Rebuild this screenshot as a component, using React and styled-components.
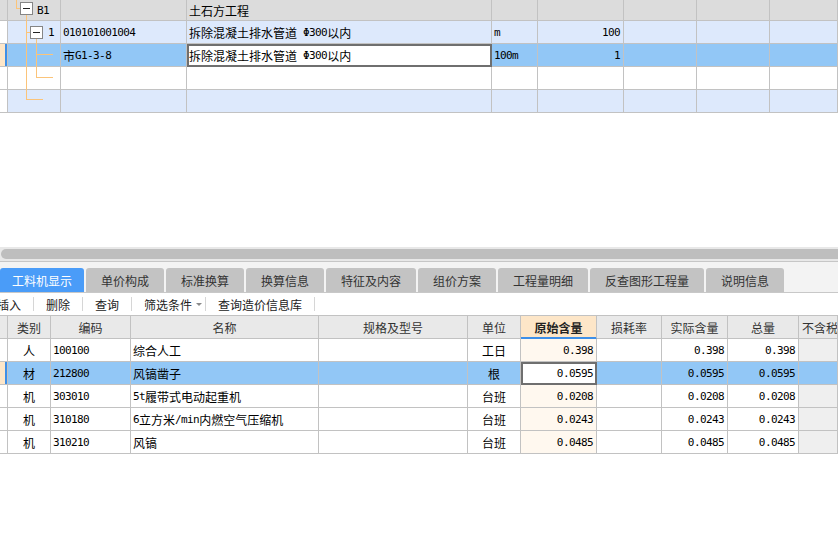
import React from "react";
import styled, { createGlobalStyle } from "styled-components";

const GlobalStyle = createGlobalStyle`
  html, body { margin: 0; padding: 0; background: #fff; }
  body {
    font-family: "Noto Sans CJK SC", "Noto Sans", sans-serif;
    font-size: 12px;
    color: #000;
  }
  * { box-sizing: border-box; }
`;

const LINE = "#c2c2c2";

const Page = styled.div`
  width: 838px;
  height: 533px;
  overflow: hidden;
  display: flex;
  flex-direction: column;
  background: #fff;
`;

const TopPane = styled.div`
  position: relative;
  height: 247px;
  flex: none;
`;

const GridRow = styled.div`
  display: grid;
  grid-template-columns: ${(p) => p.$cols};
  height: ${(p) => p.$h}px;
  background: ${(p) => p.$bg || "#fff"};
`;

const Cell = styled.div`
  display: flex;
  align-items: center;
  justify-content: ${(p) =>
    p.$align === "right" ? "flex-end" : p.$align === "center" ? "center" : "flex-start"};
  padding: ${(p) => (p.$align === "right" ? "0 3px 0 0" : p.$align === "center" ? "0" : `0 0 0 ${p.$pad ?? 2}px`)};
  border-right: 1px solid ${LINE};
  border-bottom: 1px solid ${LINE};
  background: ${(p) => p.$bg || "transparent"};
  white-space: nowrap;
  overflow: hidden;
  font-size: 12px;
  color: ${(p) => p.$color || "#000"};
  font-weight: ${(p) => (p.$bold ? 700 : 400)};
  ${(p) => (p.$edit ? "outline: 2px solid #6f6f6f; outline-offset: -2px; background: #fff;" : "")}
`;

const Indicator = styled(Cell)`
  background: ${(p) =>
    p.$sel ? "linear-gradient(to right, #fde6c8 0 5px, #3d8fe8 5px 7px)" : p.$bg || "transparent"};
`;

const HeadCell = styled(Cell)`
  color: #333;
  ${(p) =>
    p.$active
      ? "background: #fde6c8; font-weight: 700; color: #222; border-bottom-color: #3d8fe8; box-shadow: inset 0 -1px 0 #3d8fe8;"
      : ""}
`;

const Mono = styled.span`
  font-family: "DejaVu Sans Mono", "Liberation Mono", monospace;
  font-size: 11px;
  letter-spacing: -0.6px;
  white-space: pre;
`;

const TreeSvg = styled.svg`
  position: absolute;
  left: 0;
  top: 0;
  pointer-events: none;
`;

const Scrollbar = styled.div`
  height: 15px;
  flex: none;
  background: #e8e8e8;
  padding: 2px 0 2px 1px;
  border-bottom: 1px solid #c6c6c6;
`;

const Thumb = styled.div`
  height: 10px;
  background: #bebebe;
  border-radius: 5px 0 0 5px;
`;

const TabStrip = styled.div`
  height: 31px;
  flex: none;
  background: #f3f3f3;
  border-bottom: 1px solid #c8c8c8;
  display: flex;
  align-items: flex-end;
  gap: 2px;
`;

const Tab = styled.div`
  width: ${(p) => p.$w}px;
  height: 24px;
  flex: none;
  display: flex;
  align-items: center;
  justify-content: center;
  border-radius: 3px 3px 0 0;
  background: ${(p) => (p.$active ? "#4a9cf8" : "#c3c3c3")};
  color: ${(p) => (p.$active ? "#fff" : "#333")};
  font-size: 12px;
  white-space: nowrap;
`;

const Toolbar = styled.div`
  height: 22px;
  flex: none;
  display: flex;
  align-items: center;
  background: #fff;
  overflow: hidden;
`;

const ToolItem = styled.div`
  display: flex;
  align-items: center;
  gap: 4px;
  padding: 0 ${(p) => (p.$menu ? 3 : 12)}px 0 12px;
  margin-left: ${(p) => (p.$first ? "-15px" : "0")};
  font-size: 12px;
  color: #222;
  white-space: nowrap;
`;

const Sep = styled.div`
  width: 1px;
  height: 14px;
  background: #d6d6d6;
  flex: none;
`;

const Caret = styled.span`
  width: 0;
  height: 0;
  border-left: 3px solid transparent;
  border-right: 3px solid transparent;
  border-top: 3px solid #8a8a8a;
  margin-top: 1px;
`;

const BottomGrid = styled.div`
  border-top: 1px solid ${LINE};
  flex: none;
`;

const TOP_COLS = "8px 53px 126px 305px 46px 86px 73px 73px 1fr";
const BOT_COLS = "8px 43px 80px 188px 149px 53px 76px 65px 66px 71px 1fr";

const ASCII = /^[\x20-\x7E\u03A6]+$/;
const mix = (t) =>
  t
    .split(/([\x20-\x7E\u03A6]+)/)
    .filter(Boolean)
    .map((s, i) => (ASCII.test(s) ? <Mono key={i}>{s}</Mono> : <span key={i}>{s}</span>));

const C = {
  gray: "#dcdcdc",
  light: "#dde9fc",
  sel: "#92c7f6",
  white: "#fff",
};

const tabs = [
  ["工料机显示", 84, true],
  ["单价构成", 78],
  ["标准换算", 78],
  ["换算信息", 78],
  ["特征及内容", 90],
  ["组价方案", 78],
  ["工程量明细", 90],
  ["反查图形工程量", 114],
  ["说明信息", 78],
];

const tools = ["插入", "删除", "查询", "筛选条件", "查询造价信息库"];

const items = [
  { type: "人", code: "100100", name: "综合人工", unit: "工日", orig: "0.398", act: "0.398", total: "0.398" },
  { type: "材", code: "212800", name: "风镐凿子", unit: "根", orig: "0.0595", act: "0.0595", total: "0.0595", sel: true },
  { type: "机", code: "303010", name: "5t履带式电动起重机", unit: "台班", orig: "0.0208", act: "0.0208", total: "0.0208" },
  { type: "机", code: "310180", name: "6立方米/min内燃空气压缩机", unit: "台班", orig: "0.0243", act: "0.0243", total: "0.0243" },
  { type: "机", code: "310210", name: "风镐", unit: "台班", orig: "0.0485", act: "0.0485", total: "0.0485" },
];

function TreeLines() {
  return (
    <TreeSvg width="60" height="112">
      <g stroke="#fbc47a" strokeWidth="1" fill="none" shapeRendering="crispEdges">
        <path d="M16.5 0 V8.5 H20" />
        <path d="M26.5 15 V99.5 H43" />
        <path d="M26.5 32.5 H30" />
        <path d="M36.5 38 V77.5 H53" />
        <path d="M36.5 54.5 H53" />
      </g>
      <g shapeRendering="crispEdges">
        <rect x="20.5" y="2.5" width="12" height="12" fill="#fff" stroke="#858585" />
        <path d="M23 8.5 H30" stroke="#222" />
        <rect x="30.5" y="26.5" width="12" height="12" fill="#fff" stroke="#858585" />
        <path d="M33 32.5 H40" stroke="#222" />
      </g>
    </TreeSvg>
  );
}

function TopRow({ h = 23, bg, indBg, sel, tree, treePad, code, name, edit, unit, qty }) {
  return (
    <GridRow $cols={TOP_COLS} $h={h} $bg={bg}>
      <Indicator $sel={sel} $bg={indBg} />
      <Cell $pad={treePad}>{tree && <Mono>{tree}</Mono>}</Cell>
      <Cell>{code && mix(code)}</Cell>
      <Cell $edit={edit}>{name && mix(name)}</Cell>
      <Cell>{unit && <Mono>{unit}</Mono>}</Cell>
      <Cell $align="right">{qty && <Mono>{qty}</Mono>}</Cell>
      <Cell />
      <Cell />
      <Cell />
    </GridRow>
  );
}

export default function App() {
  return (
    <Page>
      <GlobalStyle />
      <TopPane>
        <TopRow h={21} bg={C.gray} tree="B1" treePad={29} name="土石方工程" />
        <TopRow bg={C.light} indBg="#fff" tree="1" treePad={40} code="010101001004" name="拆除混凝土排水管道 Φ300以内" unit="m" qty="100" />
        <TopRow bg={C.sel} sel code="市G1-3-8" name="拆除混凝土排水管道 Φ300以内" edit unit="100m" qty="1" />
        <TopRow bg={C.white} />
        <TopRow bg={C.light} indBg="#fff" />
        <TreeLines />
      </TopPane>

      <Scrollbar>
        <Thumb />
      </Scrollbar>

      <TabStrip>
        {tabs.map(([t, w, a]) => (
          <Tab key={t} $w={w} $active={a}>
            {t}
          </Tab>
        ))}
      </TabStrip>

      <Toolbar>
        {tools.map((t, i) => (
          <React.Fragment key={t}>
            <ToolItem $first={i === 0} $menu={t === "筛选条件"}>
              {t}
              {t === "筛选条件" && <Caret />}
            </ToolItem>
            <Sep />
          </React.Fragment>
        ))}
      </Toolbar>

      <BottomGrid>
        <GridRow $cols={BOT_COLS} $h={23} $bg="#e9e9e9">
          <HeadCell />
          <HeadCell $align="center">类别</HeadCell>
          <HeadCell $align="center">编码</HeadCell>
          <HeadCell $align="center">名称</HeadCell>
          <HeadCell $align="center">规格及型号</HeadCell>
          <HeadCell $align="center">单位</HeadCell>
          <HeadCell $align="center" $active>原始含量</HeadCell>
          <HeadCell $align="center">损耗率</HeadCell>
          <HeadCell $align="center">实际含量</HeadCell>
          <HeadCell $align="center">总量</HeadCell>
          <HeadCell $pad={3}>不含税市场价</HeadCell>
        </GridRow>
        {items.map((r) => (
          <GridRow key={r.code} $cols={BOT_COLS} $h={23} $bg={r.sel ? C.sel : "#fff"}>
            <Indicator $sel={r.sel} />
            <Cell $align="center">{r.type}</Cell>
            <Cell>
              <Mono>{r.code}</Mono>
            </Cell>
            <Cell>{mix(r.name)}</Cell>
            <Cell />
            <Cell $align="center">{r.unit}</Cell>
            <Cell $align="right" $bg={r.sel ? "#fff" : "#fff8ef"} $edit={r.sel}>
              <Mono>{r.orig}</Mono>
            </Cell>
            <Cell />
            <Cell $align="right">
              <Mono>{r.act}</Mono>
            </Cell>
            <Cell $align="right">
              <Mono>{r.total}</Mono>
            </Cell>
            <Cell $bg={r.sel ? undefined : "#efefef"} />
          </GridRow>
        ))}
      </BottomGrid>
    </Page>
  );
}
